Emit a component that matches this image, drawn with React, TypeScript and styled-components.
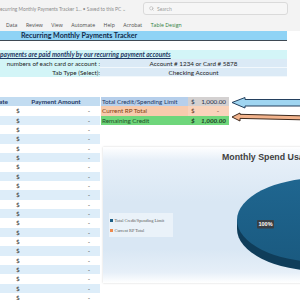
import React from "react";
import styled, { createGlobalStyle } from "styled-components";
import { Search } from "lucide-react";

const Global = createGlobalStyle`
  html, body { margin: 0; padding: 0; background: #ffffff; }
  body { font-family: Lato, "Liberation Sans", sans-serif; }
`;

const Screen = styled.div`
  width: 300px;
  height: 300px;
  overflow: hidden;
  background: #ffffff;
  display: flex;
  flex-direction: column;
`;

const TitleBar = styled.div`
  height: 17px;
  flex: none;
  background: #f3f3f3;
  display: flex;
  align-items: center;
`;

const DocTitle = styled.span`
  width: 143px;
  flex: none;
  font-size: 4.8px;
  color: #8c8c8c;
  white-space: nowrap;
  overflow: hidden;
`;

const SearchBox = styled.div`
  width: 145px;
  height: 13px;
  flex: none;
  box-sizing: border-box;
  border: 1px solid #dadada;
  border-radius: 3px;
  background: #f6f6f6;
  display: flex;
  align-items: center;
  gap: 3px;
  padding-left: 5px;
  font-size: 5px;
  color: #9c9c9c;
`;

const TabsRow = styled.div`
  height: 14px;
  flex: none;
  background: #f3f3f3;
  display: flex;
  align-items: center;
  gap: 8.5px;
  padding: 2px 0 0 6px;
  box-sizing: border-box;
`;

const Tab = styled.span<{ $accent?: boolean }>`
  font-family: "Open Sans", Lato, sans-serif;
  font-size: 5.2px;
  color: ${(p) => (p.$accent ? "#2e7d3a" : "#4a4a4a")};
  white-space: nowrap;
`;

const Sheet = styled.div`
  flex: 1;
  display: flex;
  flex-direction: column;
`;

const Banner = styled.div`
  width: 287px;
  height: 10px;
  box-sizing: border-box;
  background: #8fd3f5;
  border-bottom: 1.5px solid #3e4953;
  display: flex;
  align-items: center;
  padding-left: 21px;
  font-size: 7.1px;
  font-weight: 700;
  color: #0f2a4a;
  white-space: nowrap;
`;

const Gap = styled.div<{ $h: number }>`
  height: ${(p) => p.$h}px;
  flex: none;
`;

const InfoRow = styled.div`
  width: 287px;
  height: 9px;
  display: flex;
  background: #d3f5f7;
  font-size: 6.3px;
  color: #1e1e1e;
  white-space: nowrap;
`;

const Notice = styled.span`
  font-weight: 700;
  font-style: italic;
  text-decoration: underline;
  color: #1f3864;
  font-size: 6.5px;
  line-height: 9px;
`;

const InfoLabel = styled.div`
  width: 100px;
  flex: none;
  text-align: right;
  line-height: 9px;
`;

const InfoValue = styled.div`
  flex: 1;
  background: #dbeaf6;
  border-bottom: 1px solid #f2f8fc;
  text-align: center;
  line-height: 9px;
`;

const Main = styled.div`
  display: flex;
  align-items: flex-start;
`;

const Ledger = styled.div`
  width: 100px;
  flex: none;
  display: flex;
  flex-direction: column;
`;

const LedgerRow = styled.div<{ $kind: "head" | "even" | "odd" }>`
  height: 9.33px;
  display: flex;
  align-items: center;
  background: ${(p) =>
    p.$kind === "head" ? "#c2dcf1" : p.$kind === "even" ? "#ffffff" : "#ddedf9"};
  font-size: 6.4px;
  color: ${(p) => (p.$kind === "head" ? "#1f3864" : "#333333")};
  font-weight: ${(p) => (p.$kind === "head" ? 700 : 400)};
  white-space: nowrap;
`;

const DateCell = styled.div`
  width: 12px;
  flex: none;
  display: flex;
  justify-content: flex-end;
  overflow: hidden;
  padding-right: 4px;
  box-sizing: border-box;
  span { flex: none; }
`;

const AmountHead = styled.div`
  flex: 1;
  text-align: center;
`;

const AmountCell = styled.div`
  flex: 1;
  display: flex;
  justify-content: space-between;
  padding: 0 10px 0 4px;
`;

const RightCol = styled.div`
  flex: 1;
  display: flex;
  flex-direction: column;
  padding-left: 1px;
`;

const SummaryWrap = styled.div`
  display: flex;
  align-items: flex-start;
`;

const Summary = styled.div`
  width: 128px;
  flex: none;
  display: flex;
  flex-direction: column;
`;

const SumRow = styled.div`
  height: 9.33px;
  display: flex;
  font-size: 6.3px;
  white-space: nowrap;
`;

const SumLabel = styled.div<{ $bg: string; $fg: string }>`
  width: 86px;
  flex: none;
  background: ${(p) => p.$bg};
  color: ${(p) => p.$fg};
  padding-left: 1px;
  line-height: 9.33px;
`;

const SumValue = styled.div<{ $bg: string; $fg: string; $strong?: boolean; $dash?: boolean }>`
  flex: 1;
  background: ${(p) => p.$bg};
  color: ${(p) => p.$fg};
  display: flex;
  justify-content: space-between;
  padding: 0 ${(p) => (p.$dash ? "10px" : "3px")} 0 3px;
  line-height: 9.33px;
  font-style: ${(p) => (p.$strong ? "italic" : "normal")};
  font-weight: ${(p) => (p.$strong ? 700 : 400)};
`;

const Arrows = styled.svg`
  flex: none;
  display: block;
`;

const ChartCard = styled.div`
  width: 330px;
  height: 136px;
  margin: 22px 0 0 2px;
  box-sizing: border-box;
  background: linear-gradient(
    to bottom,
    #ffffff 0%,
    #e6eff8 10%,
    #d9e7f4 40%,
    #d9e7f4 75%,
    #e6eff8 92%,
    #ffffff 100%
  );
  box-shadow: 0 0 2px rgba(0, 0, 0, 0.18);
  display: flex;
  flex-direction: column;
`;

const ChartTitle = styled.div`
  padding-top: 5px;
  height: 15px;
  box-sizing: border-box;
  text-align: center;
  font-family: "Liberation Sans", Arial, sans-serif;
  font-size: 8.8px;
  line-height: 10px;
  font-weight: 700;
  color: #3f3f3f;
  white-space: nowrap;
`;

const ChartBody = styled.div`
  display: flex;
  align-items: flex-start;
`;

const Legend = styled.div`
  width: 64px;
  flex: none;
  margin: 51px 0 0 6px;
  padding: 2px 0;
  background: rgba(255, 255, 255, 0.45);
  display: flex;
  flex-direction: column;
`;

const LegendItem = styled.div`
  height: 10px;
  display: flex;
  align-items: center;
  gap: 1.5px;
  padding-left: 1px;
  font-family: "Liberation Serif", serif;
  font-size: 4.4px;
  color: #555555;
  white-space: nowrap;
`;

const Swatch = styled.span<{ $c: string }>`
  width: 3px;
  height: 3px;
  background: ${(p) => p.$c};
  flex: none;
`;

const Pie = styled.svg`
  flex: none;
  margin: 16px 0 0 64px;
  display: block;
  overflow: visible;
`;

export default function App() {
  const rows = Array.from({ length: 21 }, (_, i) => i);
  return (
    <>
      <Global />
      <Screen>
        <TitleBar>
          <DocTitle>ecurring Monthly Payments Tracker 1...  •  Saved to this PC ⌄</DocTitle>
          <SearchBox>
            <Search size={5} strokeWidth={2} />
            <span>Search</span>
          </SearchBox>
        </TitleBar>
        <TabsRow>
          <Tab>Data</Tab>
          <Tab>Review</Tab>
          <Tab>View</Tab>
          <Tab>Automate</Tab>
          <Tab>Help</Tab>
          <Tab>Acrobat</Tab>
          <Tab $accent>Table Design</Tab>
        </TabsRow>
        <Sheet>
          <Banner>Recurring Monthly Payments Tracker</Banner>
          <Gap $h={9} />
          <InfoRow>
            <Notice>payments are paid monthly by our recurring payment accounts</Notice>
          </InfoRow>
          <InfoRow>
            <InfoLabel>numbers of each card or account :</InfoLabel>
            <InfoValue>Account # 1234 or Card # 5878</InfoValue>
          </InfoRow>
          <InfoRow>
            <InfoLabel>Tab Type (Select):</InfoLabel>
            <InfoValue>Checking Account</InfoValue>
          </InfoRow>
          <Gap $h={20} />
          <Main>
            <Ledger>
              <LedgerRow $kind="head">
                <DateCell>
                  <span>Date</span>
                </DateCell>
                <AmountHead>Payment Amount</AmountHead>
              </LedgerRow>
              {rows.map((i) => (
                <LedgerRow key={i} $kind={i % 2 === 0 ? "even" : "odd"}>
                  <DateCell />
                  <AmountCell>
                    <span>$</span>
                    <span>-</span>
                  </AmountCell>
                </LedgerRow>
              ))}
            </Ledger>
            <RightCol>
              <SummaryWrap>
                <Summary>
                  <SumRow>
                    <SumLabel $bg="#b6cfeb" $fg="#1f3864">Total Credit/Spending Limit</SumLabel>
                    <SumValue $bg="#d4d1d1" $fg="#1f2f4a">
                      <span>$</span>
                      <span>1,000.00</span>
                    </SumValue>
                  </SumRow>
                  <SumRow>
                    <SumLabel $bg="#f8cbad" $fg="#843c0c">Current RP Total</SumLabel>
                    <SumValue $bg="#f9d3bb" $fg="#5a3020" $dash>
                      <span>$</span>
                      <span>-</span>
                    </SumValue>
                  </SumRow>
                  <SumRow>
                    <SumLabel $bg="#6fd67b" $fg="#1e4f26">Remaining Credit</SumLabel>
                    <SumValue $bg="#6fd67b" $fg="#1b3a1f" $strong>
                      <span>$</span>
                      <span>1,000.00</span>
                    </SumValue>
                  </SumRow>
                </Summary>
                <Arrows width="71" height="28" viewBox="0 0 71 28">
                  <path
                    d="M3 5.5 L16 0.5 L16 2.5 L72 2.5 L72 9 L16 9 L16 11 Z"
                    fill="#9fd5f1"
                    stroke="#24405e"
                    strokeWidth="1"
                    strokeLinejoin="round"
                  />
                  <path
                    d="M3 20 L11 16 L11 17.3 L72 18.8 L72 22.8 L11 21.4 L11 24 Z"
                    fill="#f2b38c"
                    stroke="#3d2a1e"
                    strokeWidth="1"
                    strokeLinejoin="round"
                  />
                </Arrows>
              </SummaryWrap>
              <ChartCard>
                <ChartTitle>Monthly Spend Usage</ChartTitle>
                <ChartBody>
                  <Legend>
                    <LegendItem>
                      <Swatch $c="#1d5f86" />
                      <span>Total Credit/Spending Limit</span>
                    </LegendItem>
                    <LegendItem>
                      <Swatch $c="#ee8a4e" />
                      <span>Current RP Total</span>
                    </LegendItem>
                  </Legend>
                  <Pie width="170" height="95" viewBox="0 0 170 95">
                    <defs>
                      <linearGradient id="top" x1="0" y1="0" x2="0" y2="1">
                        <stop offset="0" stopColor="#1f6690" />
                        <stop offset="1" stopColor="#1a5a80" />
                      </linearGradient>
                    </defs>
                    <path d="M0 42 L0 51 A84 42 0 0 0 168 51 L168 42 Z" fill="#0f3d5a" />
                    <ellipse cx="84" cy="42" rx="84" ry="42" fill="url(#top)" />
                    <rect x="20" y="42" width="17" height="8.5" rx="1" fill="#3a3f44" />
                    <text
                      x="28.5"
                      y="48.3"
                      textAnchor="middle"
                      fontFamily="Liberation Sans, Arial, sans-serif"
                      fontSize="5.5"
                      fontWeight="700"
                      fill="#ffffff"
                    >
                      100%
                    </text>
                  </Pie>
                </ChartBody>
              </ChartCard>
            </RightCol>
          </Main>
        </Sheet>
      </Screen>
    </>
  );
}
